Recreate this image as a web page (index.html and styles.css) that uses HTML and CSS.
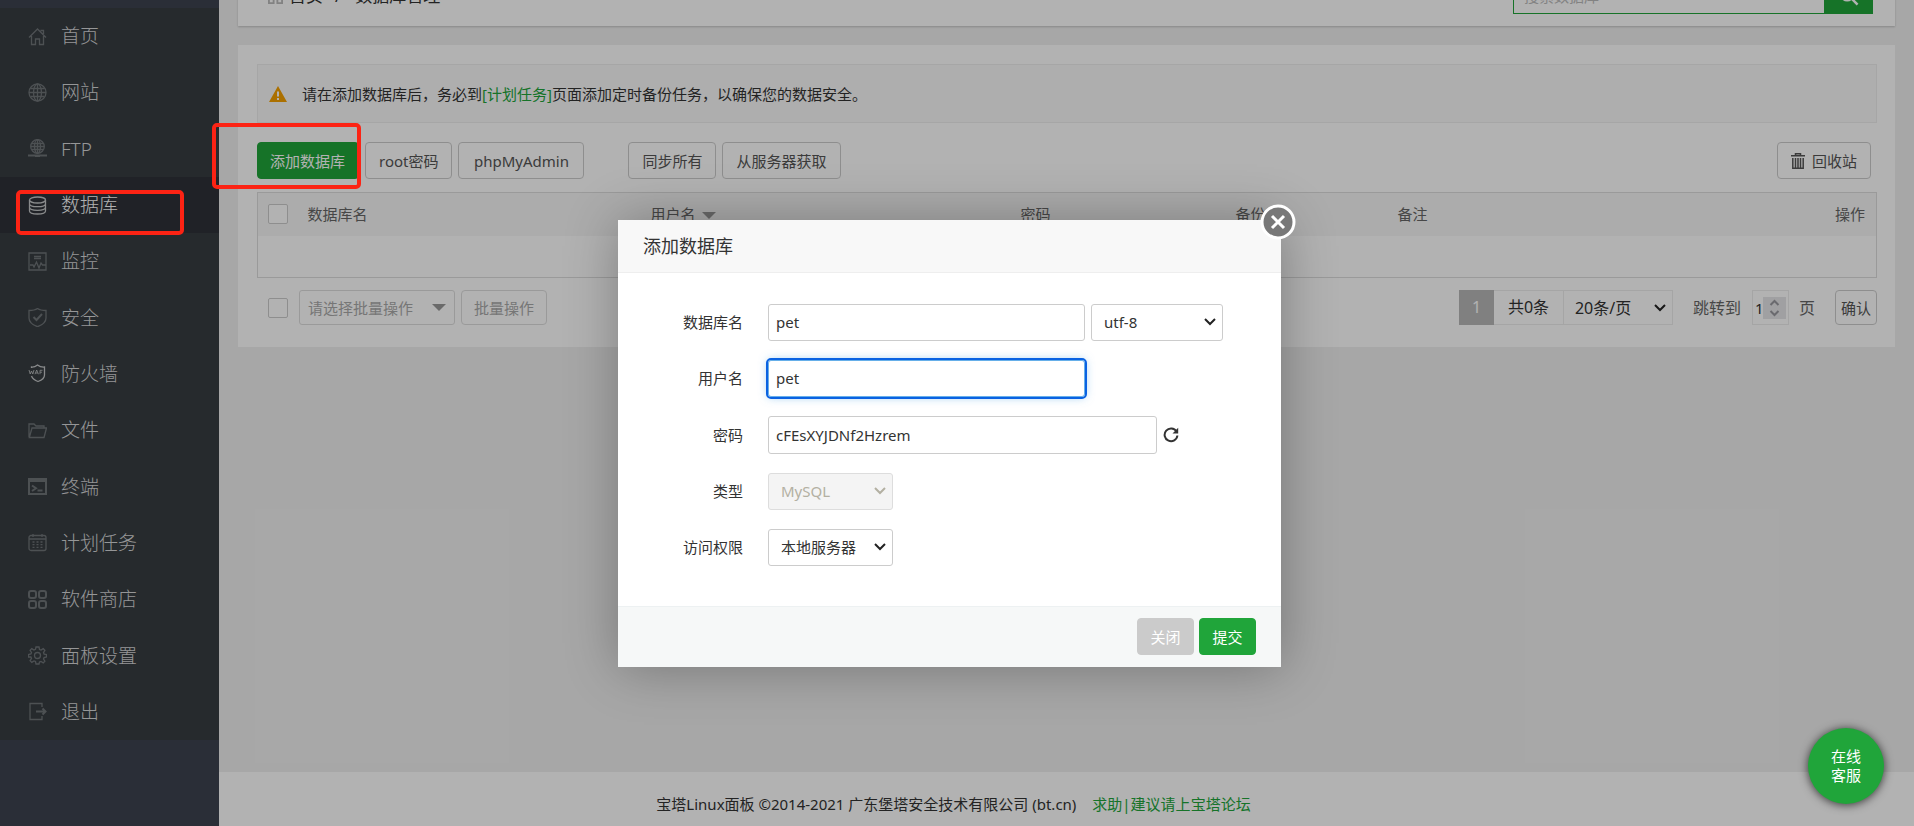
FILE: index.html
```html
<!DOCTYPE html>
<html lang="zh-CN">
<head>
<meta charset="utf-8">
<title>宝塔Linux面板</title>
<link rel="stylesheet" href="styles.css">
</head>
<body>
<div class="layout">
  <nav class="sidebar">
    <ul class="menu">
      <li><a href="#"><svg class="menu-icon" viewBox="0 0 19 19"><path d="M1 10.500 9.500 2 18 10.500M3.500 9v8.500h4V12h4v5.500h4V9M12.500 3.500h3V7"/></svg>首页</a></li>
      <li><a href="#"><svg class="menu-icon" viewBox="0 0 19 19"><circle cx="9.500" cy="9.500" r="8.500"/><ellipse cx="9.500" cy="9.500" rx="4" ry="8.500"/><path d="M9.500 1v17M1 9.500h17M2.500 5.500h14M2.500 13.500h14"/></svg>网站</a></li>
      <li><a href="#"><svg class="menu-icon" viewBox="0 0 19 19"><circle cx="9.500" cy="7.500" r="6.800"/><ellipse cx="9.500" cy="7.500" rx="3" ry="6.800"/><path d="M9.500 1v14M3 7.500h13M4 4.500h11M4 10.500h11"/><path class="thick" d="M0 16.500h19M7 17h5"/></svg>FTP</a></li>
      <li class="active"><a href="#"><svg class="menu-icon" viewBox="0 0 19 19"><ellipse cx="9.500" cy="4" rx="8" ry="3"/><path d="M1.500 4v11c0 4 16 4 16 0V4M1.500 7.700c0 4 16 4 16 0M1.500 11.300c0 4 16 4 16 0"/></svg>数据库</a></li>
      <li><a href="#"><svg class="menu-icon" viewBox="0 0 19 19"><path d="M1 1h17v17H1zM6 4.500h7M6 6.500h7M2 13h3l1 2 2.500-5 2.500 6 2-5 1.500 2h3"/></svg>监控</a></li>
      <li><a href="#"><svg class="menu-icon" viewBox="0 0 19 19"><path d="M9.500 0.500C7 2.300 4 2.500 1 2.500V10c0 4 4 7 8.500 8.700C14 17 18 14 18 10V2.500c-3 0-6-.2-8.500-2z"/><path class="thick" d="m5.500 9 3 3 5.500-6"/></svg>安全</a></li>
      <li><a href="#"><svg class="menu-icon waf" viewBox="0 0 19 19"><path d="M3.500 4V3c2.500.3 4-.5 6-2 2 1.500 4 2.300 7 2v8c0 3-3 5.300-6.500 6.500-3-1-5.500-3-6.500-5.500"/><path class="fine" d="M1 6l1.200 4L3.500 7l1.300 3L6 6M7 10.200 8.700 6l1.700 4.200M7.700 9h2M12 10.200V6.300h2.500M12 8.200h2"/></svg>防火墙</a></li>
      <li><a href="#"><svg class="menu-icon" viewBox="0 0 19 19"><path d="M1 16V3h5l2 2h8v2M1.300 16.500 4 7h14.500L16 16.500z"/></svg>文件</a></li>
      <li><a href="#"><svg class="menu-icon" viewBox="0 0 19 19"><path class="thick" d="M1 2h17v15H1zM4 8.500l4 2.800-4 2.700M9.500 13.500h5M1 4h17"/></svg>终端</a></li>
      <li><a href="#"><svg class="menu-icon" viewBox="0 0 19 19"><rect x="1" y="2.500" width="17" height="15" rx="2"/><path d="M5 1v3M14 1v3M1 6h17"/><path stroke-dasharray="2 2" d="M4.500 9h11M4.500 11.700h11M4.500 14.400h11"/></svg>计划任务</a></li>
      <li><a href="#"><svg class="menu-icon" viewBox="0 0 19 19"><g class="thick"><rect x="1" y="1" width="7" height="7" rx="2"/><rect x="11" y="1" width="7" height="7" rx="2"/><rect x="1" y="11" width="7" height="7" rx="2"/><rect x="11" y="11" width="7" height="7" rx="2"/></g></svg>软件商店</a></li>
      <li><a href="#"><svg class="menu-icon" viewBox="0 0 19 19"><circle cx="9.500" cy="9.500" r="3"/><path d="m8 1h3l.5 2.500 1.500.6 2.200-1.400 1.700 1.700-1.400 2.200.6 1.500 2.400.4v2.500l-2.400.5-.6 1.500 1.400 2.200-1.700 1.700-2.200-1.400-1.500.6L11 18H8l-.5-2.500-1.500-.6-2.200 1.400-1.700-1.700 1.400-2.200-.6-1.500L.5 11V8.500L2.900 8l.6-1.500-1.400-2.200 1.700-1.700L6 4l1.500-.6z"/></svg>面板设置</a></li>
      <li><a href="#"><svg class="menu-icon" viewBox="0 0 19 19"><path d="M14 5V1.500H2v16h12V14"/><path class="thick" d="M8 9.500h9M14.500 6.500l3 3-3 3"/></svg>退出</a></li>
    </ul>
  </nav>
  <main class="main">
    <header class="topbar">
      <div class="crumbs">
        <svg class="crumb-icon" viewBox="0 0 16 16"><path d="M1 1h5v5H1zM10 1h5v5h-5zM1 10h5v5H1zM10 10h5v5h-5z"/></svg>
        <a href="#">首页</a><span class="slash">/</span><span>数据库管理</span>
      </div>
      <form class="search">
        <input type="text" placeholder="搜索数据库" aria-label="搜索数据库">
        <button type="button" aria-label="搜索"><svg viewBox="0 0 18 18"><circle cx="7.500" cy="7.500" r="5"/><path d="m11 11 5 5"/></svg></button>
      </form>
    </header>
    <section class="card">
      <div class="notice">
        <svg class="warn" viewBox="0 0 18 16"><path fill="#f5a100" d="M9 0 18 16H0z"/><path fill="#fff" d="M8 5.500h2v5H8zM8 12h2v2H8z"/></svg>
        <p>请在添加数据库后，务必到<a href="#">[计划任务]</a>页面添加定时备份任务，以确保您的数据安全。</p>
      </div>
      <div class="toolbar">
        <button class="btn primary">添加数据库</button>
        <button class="btn">root密码</button>
        <button class="btn pma">phpMyAdmin</button>
        <button class="btn group">同步所有</button>
        <button class="btn">从服务器获取</button>
        <button class="btn recycle"><svg viewBox="0 0 14 16"><path d="M0 2.800h14M4.500 2.500V.8h5v1.700M1.800 5v10.200h10.400V5M4.500 5v10M7 5v10M9.500 5v10"/></svg>回收站</button>
      </div>
      <table class="table">
        <thead>
          <tr><th class="c-check"><input type="checkbox" aria-label="全选"></th><th class="c-name">数据库名</th><th class="c-user">用户名<i class="caret"></i></th><th class="c-pass">密码</th><th class="c-back">备份</th><th>备注</th><th class="c-op">操作</th></tr>
        </thead>
        <tbody><tr><td colspan="7"></td></tr></tbody>
      </table>
      <div class="bottom">
        <input type="checkbox" aria-label="选择全部">
        <button class="batch-select" disabled>请选择批量操作<i class="caret"></i></button>
        <button class="btn batch" disabled>批量操作</button>
        <div class="pager">
          <span class="page-now">1</span><span class="total">共0条</span><select aria-label="每页条数"><option>20条/页</option></select>
          <label class="jump" for="jump">跳转到</label>
          <span class="num"><input id="jump" type="text" inputmode="numeric" value="1"><svg viewBox="0 0 23 22"><path d="m7.500 8 4-4 4 4M7.500 14l4 4 4-4"/></svg></span>
          <span class="page-unit">页</span>
          <button class="btn ok">确认</button>
        </div>
      </div>
    </section>
    <footer class="footer"><span>宝塔Linux面板 ©2014-2021 广东堡塔安全技术有限公司 (bt.cn)</span><a href="#">求助|建议请上宝塔论坛</a></footer>
  </main>
</div>

<div class="overlay">
  <div class="modal" role="dialog" aria-labelledby="modal-title">
    <button class="modal-x" aria-label="关闭窗口"><svg viewBox="0 0 36 36"><circle cx="18" cy="18" r="16"/><path d="m12 12 12 12M24 12 12 24"/></svg></button>
    <h2 id="modal-title">添加数据库</h2>
    <form class="form">
      <div class="row"><label for="f-name">数据库名</label><input id="f-name" class="w-name" type="text" value="pet"><select class="w-code" aria-label="编码"><option>utf-8</option></select></div>
      <div class="row"><label for="f-user">用户名</label><input id="f-user" class="w-name focused" type="text" value="pet"></div>
      <div class="row"><label for="f-pass">密码</label><input id="f-pass" class="w-pass" type="text" value="cFEsXYJDNf2Hzrem"><button type="button" class="refresh" aria-label="随机密码"><svg viewBox="0 0 16 16"><path d="M13.500 4.500A6.400 6.400 0 1 0 14.400 8.500"/><path class="tip" d="M15.200.8v5.700H9.500z"/></svg></button></div>
      <div class="row"><label for="f-type">类型</label><select id="f-type" class="w-small" disabled><option>MySQL</option></select></div>
      <div class="row"><label for="f-acc">访问权限</label><select id="f-acc" class="w-small"><option>本地服务器</option></select></div>
    </form>
    <div class="modal-foot"><button class="btn cancel">关闭</button><button class="btn primary">提交</button></div>
  </div>
</div>

<button class="service">在线<br>客服</button>
<div class="mark mark-menu"></div>
<div class="mark mark-add"></div>
</body>
</html>
```
FILE: styles.css
```css
* { box-sizing: border-box; }
body {
  margin: 0;
  height: 100vh;
  overflow: hidden;
  position: relative;
  background: #f0f0f0;
  color: #333;
  font: 15px/20px "Noto Sans", "Noto Sans CJK SC", sans-serif;
}
button, input, select { font: inherit; color: inherit; margin: 0; }
a { color: #20a53a; text-decoration: none; }
svg { display: block; fill: none; stroke: currentColor; flex: none; }
select {
  appearance: none;
  background: #fff url("data:image/svg+xml,%3Csvg xmlns='http://www.w3.org/2000/svg' width='12' height='8' fill='none' stroke='%23222' stroke-width='2'%3E%3Cpath d='m1 1 5 5 5-5'/%3E%3C/svg%3E") no-repeat right 6px center;
}
select:disabled {
  background-image: url("data:image/svg+xml,%3Csvg xmlns='http://www.w3.org/2000/svg' width='12' height='8' fill='none' stroke='%23b3b0a2' stroke-width='2'%3E%3Cpath d='m1 1 5 5 5-5'/%3E%3C/svg%3E");
}

.layout { display: flex; height: 100vh; }

.sidebar { width: 219px; flex: none; background: #3d424f; padding-top: 8px; }
.menu {
  list-style: none; margin: 0; padding: 0; height: 732px;
  display: grid; grid-auto-rows: 1fr; background: #373d41;
}
.menu a {
  display: flex; align-items: center; gap: 14px; height: 100%;
  padding-left: 28px; font-size: 19px; font-weight: 300; color: #d6d7d9;
}
.menu .active { background: #2e3138; }
.menu .active a { color: #fff; }
.menu-icon { width: 19px; height: 19px; color: #6f7478; stroke-width: 1.3; }
.menu-icon .thick { stroke-width: 2; }
.menu-icon .fine { stroke-width: 0.8; }
.active .menu-icon, .menu-icon.waf { color: #c4c6c8; }

.main { flex: 1; display: flex; flex-direction: column; overflow: hidden; }
.topbar {
  height: 60px; margin: -34px 19px 19px; padding: 0 22px 0 30px; flex: none;
  background: #fff; box-shadow: 0 1px 2px rgba(0,0,0,.2);
  display: flex; align-items: center; justify-content: space-between;
}
.crumbs { display: flex; align-items: center; font-size: 17px; }
.crumbs a { color: #333; }
.crumb-icon { width: 15px; height: 15px; margin-right: 6px; color: #bbb; stroke-width: 2; }
.slash { margin: 0 14px 0 12px; }
.search { display: flex; height: 36px; width: 360px; }
.search input { flex: 1; min-width: 0; border: 1px solid #20a53a; border-right: 0; padding: 0 10px; background: #fff; }
.search input::placeholder { color: #bbb; }
.search button { width: 49px; border: 0; background: #20a53a; color: #fff; display: grid; place-items: center; }
.search svg { width: 22px; height: 22px; stroke-width: 2; }

.card { background: #fff; margin: 0 19px; padding: 19px 18px 22px 19px; flex: none; }
.notice {
  height: 59px; border: 1px solid #eee; background: #fafafa; padding-left: 11px;
  display: flex; align-items: center; gap: 15px;
}
.notice p { margin: 0; }
.warn { width: 18px; height: 16px; stroke: none; }

.toolbar { display: flex; margin: 19px 0 13px; }
.btn {
  height: 37px; padding: 0 12px; border: 1px solid #ccc; border-radius: 4px;
  background: #fff; color: #555; white-space: nowrap;
}
.btn.primary { background: #20a53a; border-color: #20a53a; color: #fff; }
.toolbar .btn { margin-right: 6px; padding: 0 13px; }
.toolbar .primary { width: 102px; padding: 0 12px; text-align: left; }
.toolbar .pma { width: 126px; }
.toolbar .group { margin-left: 38px; }
.toolbar .recycle { margin-left: auto; display: flex; align-items: center; gap: 7px; }
.recycle svg { width: 14px; height: 16px; stroke-width: 1.5; }

input[type="checkbox"] {
  appearance: none; display: block; width: 20px; height: 20px;
  border: 1px solid #ccc; border-radius: 2px; background: #fff;
}
.table { width: 100%; table-layout: fixed; border-collapse: collapse; border: 1px solid #ddd; }
.table th { height: 43px; padding: 0; text-align: left; font-weight: 400; background: #f6f6f6; color: #666; }
.table td { height: 42px; padding: 0; }
.c-check { width: 50px; }
.table .c-check { padding-left: 10px; }
.c-name { width: 343px; }
.c-user { width: 370px; }
.c-pass { width: 215px; }
.c-back { width: 162px; }
.table .c-op { width: 100px; text-align: right; padding-right: 11px; }
.caret { display: inline-block; border: 7px solid transparent; border-top-color: #999; border-bottom: 0; margin-left: 6px; vertical-align: 1px; }

.bottom { display: flex; align-items: center; margin-top: 12px; padding-left: 11px; height: 35px; }
.batch-select {
  width: 156px; height: 35px; margin: 0 6px 0 11px; padding: 0 8px; color: #aaa;
  border: 1px solid #ddd; border-radius: 3px; background: #fff;
  display: flex; align-items: center; justify-content: space-between; white-space: nowrap;
}
.btn.batch { height: 35px; color: #aaa; border-color: #ddd; padding: 0 12px; }
.pager { margin-left: auto; display: flex; align-items: center; height: 35px; font-size: 16px; color: #666; }
.page-now { width: 35px; line-height: 35px; text-align: center; background: #b8b8b8; color: #fff; }
.total { width: 69px; height: 35px; line-height: 33px; text-align: center; color: #333; border: 1px solid #ececec; border-width: 1px 0; }
.pager select { width: 110px; height: 35px; padding: 0 22px 0 11px; border: 1px solid #ececec; color: #333; }
.jump { margin: 0 11px 0 20px; }
.num { display: flex; align-items: center; width: 37px; height: 35px; padding: 0 2px; border: 1px solid #ececec; color: #333; }
.num input { width: 9px; padding: 0; border: 0; background: none; flex: 1; min-width: 0; font-size: 15px; }
.num svg { width: 23px; height: 22px; background: #e6e6e8; color: #99999f; stroke-width: 2; }
.page-unit { margin: 0 20px 0 10px; }
.btn.ok { width: 42px; height: 35px; padding: 0; font-size: 15px; }

.footer {
  margin-top: auto; height: 54px; flex: none; background: #fff;
  padding: 10px 226px 0 0; display: flex; align-items: center; justify-content: center; gap: 16px;
}

.overlay {
  position: absolute; inset: 0; background: rgba(0,0,0,.3);
  display: grid; place-items: center; padding: 60px 15px 0 0;
}
.modal { position: relative; width: 663px; background: #fff; box-shadow: 1px 1px 50px rgba(0,0,0,.3); }
.modal h2 {
  margin: 0; height: 53px; line-height: 52px; padding-left: 25px;
  font-size: 18px; font-weight: 400; background: #f8f8f8; border-bottom: 1px solid #eee;
}
.modal-x { position: absolute; top: -16px; right: -15px; width: 36px; height: 36px; padding: 0; border: 0; background: none; color: #fff; }
.modal-x circle { fill: #787878; stroke-width: 3; }
.modal-x path { stroke-width: 3; }
.form { padding: 31px 25px 40px 0; display: grid; gap: 19px; }
.row { display: flex; align-items: center; }
.row label { width: 125px; margin-right: 25px; text-align: right; }
.row input, .row select { height: 37px; border: 1px solid #ccc; border-radius: 3px; background-color: #fff; }
.row input { padding: 0 7px; }
.row .w-pass { height: 38px; }
.row select { padding: 0 20px 0 12px; }
.w-name { width: 317px; margin-right: 6px; }
.w-code { width: 132px; }
.w-pass { width: 389px; }
.w-small { width: 125px; }
.row select:disabled { opacity: 1; background-color: #f4f4f4; border-color: #ddd; color: #b3b0a2; }
.row .focused { border-color: #66afe9; outline: 2px solid #0a62e2; box-shadow: 0 0 10px rgba(102,175,233,.7); }
.refresh { border: 0; background: none; padding: 0 6px; }
.refresh svg { width: 16px; height: 16px; stroke-width: 2; }
.refresh .tip { fill: currentColor; stroke: none; }
.modal-foot {
  height: 61px; padding: 0 25px; background: #f6f8f8; border-top: 1px solid #edf1f2;
  display: flex; align-items: center; justify-content: flex-end; gap: 5px;
}
.modal-foot .btn { width: 57px; }
.modal-foot .cancel { background: #cbcbcb; border-color: #cbcbcb; color: #fff; }

.service {
  position: absolute; right: 30px; bottom: 22px; width: 76px; height: 76px; padding: 0;
  border: 0; border-radius: 50%; background: #20a53a; color: #fff; line-height: 19px;
  box-shadow: 0 1px 10px rgba(0,0,0,.7);
}
.mark { position: absolute; border: 4px solid #fc2314; border-radius: 5px; pointer-events: none; }
.mark-menu { left: 16px; top: 190px; width: 168px; height: 45px; }
.mark-add { left: 212px; top: 123px; width: 149px; height: 66px; }
```
